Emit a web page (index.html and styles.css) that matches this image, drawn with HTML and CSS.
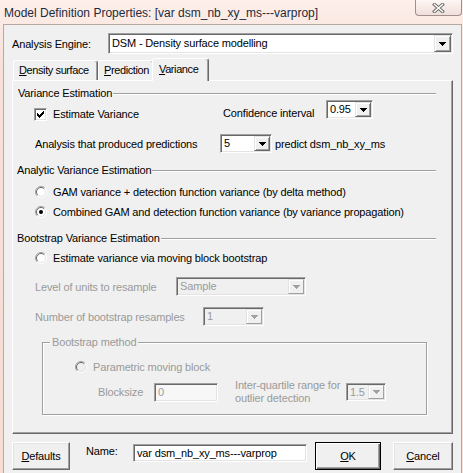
FILE: index.html
```html
<!DOCTYPE html>
<html>
<head>
<meta charset="utf-8">
<title>Model Definition Properties</title>
<link rel="stylesheet" href="styles.css">
</head>
<body>
<div class="window">
  <div class="titlebar">
    <span class="title">Model Definition Properties: [var dsm_nb_xy_ms---varprop]</span>
    <div class="close">
      <svg width="13" height="10" viewBox="0 0 13 10"><path d="M2.5 1.5L10.5 8.5M10.5 1.5L2.5 8.5" stroke="#707070" stroke-width="3.4" stroke-linecap="square" fill="none"/><path d="M2.5 1.5L10.5 8.5M10.5 1.5L2.5 8.5" stroke="#fff" stroke-width="1.4" stroke-linecap="square" fill="none"/></svg>
    </div>
  </div>
  <div class="client">
    <div class="engine-row">
      <span class="engine-label">Analysis Engine:</span>
      <div class="combo engine-combo">
        <span class="combo-text">DSM - Density surface modelling</span>
        <span class="drop"><svg width="7" height="4" viewBox="0 0 7 4"><path d="M0 0h7v1H0zM1 1h5v1H1zM2 2h3v1H2zM3 3h1v1H3z" fill="#000"/></svg></span>
      </div>
    </div>
    <div class="tabstrip">
      <div class="tab tab-density"><u>D</u>ensity surface</div>
      <div class="tab tab-prediction"><u>P</u>rediction</div>
      <div class="tab tab-active"><u>V</u>ariance</div>
    </div>
    <div class="panel">
      <div class="group-head"><span>Variance Estimation</span><span class="rule"></span></div>
      <div class="row-ci">
        <div class="check-item">
          <span class="checkbox"><svg width="9" height="9" viewBox="0 0 9 9"><path d="M1 3h1v3H1zM2 4h1v3H2zM3 5h1v3H3zM4 4h1v3H4zM5 3h1v3H5zM6 2h1v3H6zM7 1h1v3H7z" fill="#000"/></svg></span>
          <span>Estimate Variance</span>
        </div>
        <span class="ci-label">Confidence interval</span>
        <div class="combo combo-ci">
          <span class="combo-text">0.95</span>
          <span class="drop"><svg width="7" height="4" viewBox="0 0 7 4"><path d="M0 0h7v1H0zM1 1h5v1H1zM2 2h3v1H2zM3 3h1v1H3z" fill="#000"/></svg></span>
        </div>
      </div>
      <div class="row-pred">
        <span class="pred-label">Analysis that produced predictions</span>
        <div class="combo combo-pred">
          <span class="combo-text">5</span>
          <span class="drop"><svg width="7" height="4" viewBox="0 0 7 4"><path d="M0 0h7v1H0zM1 1h5v1H1zM2 2h3v1H2zM3 3h1v1H3z" fill="#000"/></svg></span>
        </div>
        <span class="pred-after">predict dsm_nb_xy_ms</span>
      </div>

      <div class="group-head gh-analytic"><span>Analytic Variance Estimation</span><span class="rule"></span></div>
      <div class="radio-row rr-first">
        <svg class="radio" width="12" height="12" viewBox="0 0 12 12"><circle cx="6" cy="6" r="5.5" fill="#fff"/><path d="M2.1 9.9A5.5 5.5 0 0 1 9.9 2.1" stroke="#a0a0a0" fill="none"/><path d="M2.8 9.2A4.5 4.5 0 0 1 9.2 2.8" stroke="#696969" fill="none"/><path d="M9.9 2.1A5.5 5.5 0 0 1 2.1 9.9" stroke="#fff" fill="none"/><path d="M9.2 2.8A4.5 4.5 0 0 1 2.8 9.2" stroke="#e3e3e3" fill="none"/></svg>
        <span>GAM variance + detection function variance (by delta method)</span>
      </div>
      <div class="radio-row rr-second">
        <svg class="radio" width="12" height="12" viewBox="0 0 12 12"><circle cx="6" cy="6" r="5.5" fill="#fff"/><path d="M2.1 9.9A5.5 5.5 0 0 1 9.9 2.1" stroke="#a0a0a0" fill="none"/><path d="M2.8 9.2A4.5 4.5 0 0 1 9.2 2.8" stroke="#696969" fill="none"/><path d="M9.9 2.1A5.5 5.5 0 0 1 2.1 9.9" stroke="#fff" fill="none"/><path d="M9.2 2.8A4.5 4.5 0 0 1 2.8 9.2" stroke="#e3e3e3" fill="none"/><circle cx="6" cy="6" r="2" fill="#000"/></svg>
        <span>Combined GAM and detection function variance (by variance propagation)</span>
      </div>

      <div class="group-head gh-bootstrap"><span>Bootstrap Variance Estimation</span><span class="rule"></span></div>
      <div class="radio-row rr-second">
        <svg class="radio" width="12" height="12" viewBox="0 0 12 12"><circle cx="6" cy="6" r="5.5" fill="#fff"/><path d="M2.1 9.9A5.5 5.5 0 0 1 9.9 2.1" stroke="#a0a0a0" fill="none"/><path d="M2.8 9.2A4.5 4.5 0 0 1 9.2 2.8" stroke="#696969" fill="none"/><path d="M9.9 2.1A5.5 5.5 0 0 1 2.1 9.9" stroke="#fff" fill="none"/><path d="M9.2 2.8A4.5 4.5 0 0 1 2.8 9.2" stroke="#e3e3e3" fill="none"/></svg>
        <span>Estimate variance via moving block bootstrap</span>
      </div>
      <div class="opt-row row-level disabled">
        <span class="level-label">Level of units to resample</span>
        <div class="combo combo-level combo-disabled">
          <span class="combo-text">Sample</span>
          <span class="drop"><svg width="7" height="4" viewBox="0 0 7 4"><path d="M0 0h7v1H0zM1 1h5v1H1zM2 2h3v1H2zM3 3h1v1H3z" fill="#a0a0a0"/></svg></span>
        </div>
      </div>
      <div class="opt-row row-number disabled">
        <span class="number-label">Number of bootstrap resamples</span>
        <div class="combo combo-number combo-disabled">
          <span class="combo-text">1</span>
          <span class="drop"><svg width="7" height="4" viewBox="0 0 7 4"><path d="M0 0h7v1H0zM1 1h5v1H1zM2 2h3v1H2zM3 3h1v1H3z" fill="#a0a0a0"/></svg></span>
        </div>
      </div>

      <fieldset class="bs-group disabled">
        <legend>Bootstrap method</legend>
        <div class="radio-row rr-param">
          <svg class="radio" width="12" height="12" viewBox="0 0 12 12"><circle cx="6" cy="6" r="5.5" fill="#f0f0f0"/><path d="M2.1 9.9A5.5 5.5 0 0 1 9.9 2.1" stroke="#a0a0a0" fill="none"/><path d="M2.8 9.2A4.5 4.5 0 0 1 9.2 2.8" stroke="#696969" fill="none"/><path d="M9.9 2.1A5.5 5.5 0 0 1 2.1 9.9" stroke="#fff" fill="none"/><path d="M9.2 2.8A4.5 4.5 0 0 1 2.8 9.2" stroke="#e3e3e3" fill="none"/></svg>
          <span>Parametric moving block</span>
        </div>
        <div class="bs-params">
          <span class="blocksize-label">Blocksize</span>
          <div class="textbox tb-block tb-disabled">0</div>
          <span class="iqr-label">Inter-quartile range for<br>outlier detection</span>
          <div class="combo combo-iqr combo-disabled">
            <span class="combo-text">1.5</span>
            <span class="drop"><svg width="7" height="4" viewBox="0 0 7 4"><path d="M0 0h7v1H0zM1 1h5v1H1zM2 2h3v1H2zM3 3h1v1H3z" fill="#a0a0a0"/></svg></span>
          </div>
        </div>
      </fieldset>
    </div>

    <div class="footer">
      <div class="btn btn-defaults"><span><u>D</u>efaults</span></div>
      <span class="name-label">Name:</span>
      <div class="textbox tb-name">var dsm_nb_xy_ms---varprop</div>
      <div class="btn btn-ok btn-default"><span><u>O</u>K</span></div>
      <div class="btn btn-cancel"><span><u>C</u>ancel</span></div>
    </div>
  </div>
</div>
</body>
</html>
```

FILE: styles.css
```css
* { box-sizing: border-box; }
html, body { margin: 0; padding: 0; }
body {
  width: 463px;
  height: 473px;
  overflow: hidden;
  background: #fbe6de;
  font-family: "Liberation Sans", Arial, sans-serif;
  font-size: 11px;
  letter-spacing: -0.15px;
  color: #000;
}
.window {
  width: 463px;
  height: 473px;
  display: flex;
  flex-direction: column;
  background: linear-gradient(#fdefea, #f8e1d9 60px, #f6dcd3);
}
.titlebar {
  height: 24px;
  flex: none;
  display: flex;
  align-items: flex-start;
  justify-content: space-between;
  padding-left: 4px;
}
.title {
  font-size: 12px;
  line-height: 14px;
  letter-spacing: 0;
  margin-top: 6px;
  color: #1c2b3c;
  white-space: nowrap;
}
.close {
  width: 47px;
  height: 16px;
  margin-right: 1px;
  border: 1px solid #a08f8b;
  border-top: none;
  border-radius: 0 0 4px 4px;
  background: linear-gradient(#fdf6f4, #efdfda);
  display: flex;
  align-items: center;
  justify-content: center;
}
.client {
  flex: 1;
  margin: 0 1px 0 3px;
  border: 1px solid #b8a8a3;
  border-bottom: none;
  background: #f0f0f0;
  padding: 8px 8px 0 8px;
  display: flex;
  flex-direction: column;
}

/* combo boxes */
.combo {
  display: flex;
  align-items: stretch;
  background: #fff;
  border: 1px solid;
  border-color: #a0a0a0 #fff #fff #a0a0a0;
  box-shadow: inset 1px 1px 0 #696969, inset -1px -1px 0 #e3e3e3;
  padding: 1px;
  height: 19px;
  flex: none;
}
.combo-text {
  flex: 1;
  padding-left: 2px;
  line-height: 14px;
  white-space: nowrap;
  overflow: hidden;
}
.drop {
  width: 16px;
  flex: none;
  background: #f0f0f0;
  border: 1px solid;
  border-color: #e3e3e3 #696969 #696969 #e3e3e3;
  box-shadow: inset 1px 1px 0 #fff, inset -1px -1px 0 #a0a0a0;
  display: flex;
  align-items: center;
  justify-content: center;
}
.drop svg { display: block; }
.combo-disabled { background: #f0f0f0; }
.combo-disabled .drop {
  border-color: #e3e3e3 #a0a0a0 #a0a0a0 #e3e3e3;
  box-shadow: inset 1px 1px 0 #fff;
}

.engine-row {
  display: flex;
  align-items: center;
  height: 21px;
}
.engine-label { width: 96px; flex: none; }
.engine-combo { flex: 1; height: 21px; }
.engine-combo .combo-text { line-height: 17px; padding-left: 2px; }
.engine-combo .drop { width: 17px; }

/* tabs */
.tabstrip {
  display: flex;
  align-items: flex-end;
  height: 22px;
  margin-top: 4px;
  padding-left: 1px;
  flex: none;
}
.tab {
  height: 20px;
  border: 1px solid;
  border-bottom: none;
  border-color: #fff #696969 transparent #fff;
  box-shadow: inset -1px 0 0 #a0a0a0;
  border-radius: 2px 3px 0 0;
  padding-left: 5px;
  line-height: 18px;
  white-space: nowrap;
  letter-spacing: -0.4px;
  background: #f0f0f0;
}
.tab-density { width: 85px; }
.tab-prediction { width: 56px; }
.tab-active {
  width: 57px;
  height: 23px;
  margin-left: -2px;
  margin-bottom: -1px;
  padding-left: 6px;
  line-height: 20px;
  position: relative;
  z-index: 2;
}

/* panel */
.panel {
  border: 1px solid;
  border-color: #fff #696969 #696969 #fff;
  box-shadow: inset -1px -1px 0 #a0a0a0;
  padding-bottom: 18px;
  flex: none;
  display: flex;
  flex-direction: column;
}
.group-head {
  display: flex;
  align-items: center;
  height: 14px;
  margin: 5px 16px 0 5px;
  white-space: nowrap;
}
.group-head .rule {
  flex: 1;
  height: 2px;
  border-top: 1px solid #a0a0a0;
  border-bottom: 1px solid #fff;
  margin-left: 1px;
  margin-top: 1px;
}
.gh-analytic { margin-top: 10px; margin-left: 4px; }
.gh-bootstrap { margin-top: 12px; margin-left: 4px; }

.row-ci {
  display: flex;
  align-items: flex-start;
  height: 24px;
}
.check-item {
  display: flex;
  align-items: center;
  width: 189px;
  flex: none;
  margin-left: 21px;
  margin-top: 8px;
  line-height: 13px;
  gap: 6px;
}
.checkbox {
  width: 13px;
  height: 13px;
  flex: none;
  background: #fff;
  border: 1px solid;
  border-color: #a0a0a0 #fff #fff #a0a0a0;
  box-shadow: inset 1px 1px 0 #696969, inset -1px -1px 0 #e3e3e3;
  display: flex;
  align-items: center;
  justify-content: center;
}
.checkbox svg { display: block; }
.ci-label { width: 103px; flex: none; margin-top: 7px; line-height: 13px; }
.combo-ci { width: 47px; }

.row-pred {
  display: flex;
  align-items: center;
  height: 19px;
  margin-top: 10px;
}
.pred-label { width: 185px; flex: none; margin-left: 22px; }
.combo-pred { width: 52px; }
.pred-after { margin-left: 3px; }

.radio-row {
  display: flex;
  align-items: center;
  height: 14px;
  margin-left: 22px;
  gap: 6px;
}
.radio { display: block; flex: none; }
.rr-first { margin-top: 8px; }
.rr-second { margin-top: 6px; }

.disabled { color: #9a9a9a; }

.opt-row {
  display: flex;
  align-items: center;
  height: 19px;
  margin-left: 22px;
}
.row-level { margin-top: 12px; }
.level-label { width: 141px; flex: none; }
.combo-level { width: 130px; }
.row-number { margin-top: 11px; }
.number-label { width: 168px; flex: none; }
.combo-number { width: 61px; }

.bs-group {
  margin: 9px 25px 0 29px;
  padding: 0 0 9px 0;
  border: 1px solid #a0a0a0;
  box-shadow: inset 1px 1px 0 #fff, 1px 1px 0 #fff;
  min-width: 0;
}
.bs-group legend {
  margin-left: 7px;
  padding: 0 2px;
  line-height: 14px;
  background: #f0f0f0;
}
.rr-param { margin-left: 32px; margin-top: 11px; }
.bs-params {
  display: flex;
  align-items: center;
  height: 26px;
  margin-top: 5px;
  margin-left: 55px;
}
.blocksize-label { width: 56px; flex: none; }
.textbox {
  height: 19px;
  border: 1px solid;
  border-color: #a0a0a0 #fff #fff #a0a0a0;
  box-shadow: inset 1px 1px 0 #696969, inset -1px -1px 0 #e3e3e3;
  background: #fff;
  padding: 0 3px;
  line-height: 17px;
  white-space: nowrap;
  flex: none;
}
.tb-disabled { background: #f7f7f7; }
.tb-block { width: 64px; }
.iqr-label { width: 111px; flex: none; margin-left: 17px; line-height: 13px; }
.combo-iqr { width: 40px; height: 18px; }
.combo-iqr .combo-text { line-height: 14px; }

/* footer */
.footer {
  display: flex;
  align-items: flex-start;
  margin-top: 8px;
  flex: none;
}
.btn {
  height: 28px;
  background: #f0f0f0;
  border: 1px solid;
  border-color: #fff #696969 #696969 #fff;
  box-shadow: inset -1px -1px 0 #a0a0a0, inset 1px 1px 0 #e3e3e3;
  display: flex;
  align-items: center;
  justify-content: center;
  flex: none;
}
.btn-default {
  border: 1px solid #000;
  box-shadow: inset 1px 1px 0 #fff, inset -1px -1px 0 #696969, inset -2px -2px 0 #a0a0a0;
}
.btn-defaults { width: 58px; }
.name-label { margin-left: 16px; width: 47px; flex: none; margin-top: 3px; line-height: 13px; }
.tb-name { width: 174px; height: 18px; margin-top: 2px; line-height: 16px; }
.btn-ok { width: 66px; margin-left: 8px; }
.btn-cancel { width: 60px; margin-left: 12px; }
```
